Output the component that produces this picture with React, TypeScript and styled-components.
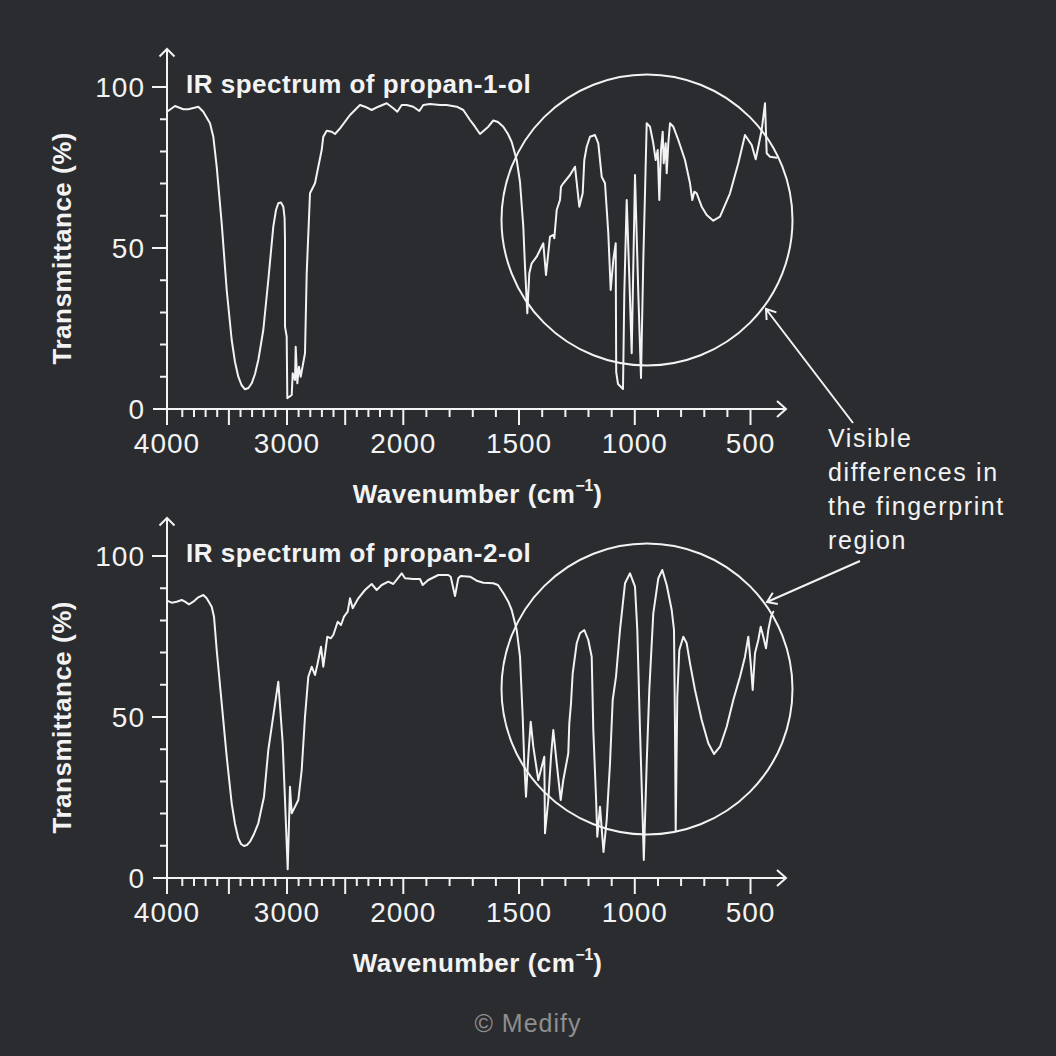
import React from "react";
import styled, { createGlobalStyle } from "styled-components";

/**
 * IR spectra of propan-1-ol and propan-2-ol, with fingerprint call-out
 */

const INK = "#f3f3f3";

const GlobalStyle = createGlobalStyle`
  html, body {
    margin: 0;
    padding: 0;
    background-color: #2b2c2f;
  }
  body {
    font-family: "Liberation Sans", Arial, sans-serif;
    color: ${INK};
  }
`;

const Page = styled.div`
  position: relative;
  width: 1056px;
  height: 1056px;
  display: flex;
  flex-direction: column;
  background-color: #2b2c2f;
  overflow: hidden;
`;

const Figure = styled.div`
  display: flex;
  flex-direction: column;
  margin: 40px 0 0 40px;
`;

const ChartBlock = styled.div`
  display: grid;
  grid-template-columns: 44px 716px;
  grid-template-rows: 425px 44px;
`;

const YTitle = styled.div`
  grid-column: 1;
  grid-row: 1;
  align-self: center;
  justify-self: center;
  margin-bottom: 9px;
  writing-mode: vertical-rl;
  transform: rotate(180deg);
  font-size: 26px;
  font-weight: 700;
  letter-spacing: 0.5px;
  line-height: 30px;
  white-space: nowrap;
`;

const XTitle = styled.div`
  grid-column: 2;
  grid-row: 2;
  justify-self: center;
  align-self: start;
  margin: 14px 0 0 71px;
  font-size: 26px;
  font-weight: 700;
  letter-spacing: 0.5px;
  line-height: 30px;
  white-space: nowrap;

  sup {
    font-size: 0.6em;
    line-height: 0;
    vertical-align: 0.75em;
    letter-spacing: 0;
  }
`;

const Plot = styled.svg`
  grid-column: 2;
  grid-row: 1;
  display: block;
  font-family: "Liberation Sans", Arial, sans-serif;
  overflow: visible;

  .line {
    fill: none;
    stroke: ${INK};
    stroke-width: 2;
  }
  .trace {
    fill: none;
    stroke: ${INK};
    stroke-width: 2;
    stroke-linejoin: round;
    stroke-linecap: round;
  }
  .tick-label {
    fill: ${INK};
    font-size: 28px;
    letter-spacing: 1px;
  }
  .title {
    fill: ${INK};
    font-size: 26px;
    font-weight: 700;
    letter-spacing: 0.5px;
  }
`;

const Overlay = styled.svg`
  position: absolute;
  inset: 0;
  pointer-events: none;
`;

const CalloutText = styled.p`
  position: absolute;
  left: 828px;
  top: 421px;
  margin: 0;
  font-size: 25px;
  line-height: 34px;
  letter-spacing: 1.6px;
`;

const Credit = styled.div`
  margin-top: 30px;
  text-align: center;
  font-size: 25px;
  line-height: 30px;
  letter-spacing: 1px;
  color: #8e8e8e;
`;

// plot geometry (px, plot frame)
const ORIGIN_X = 167;
const ORIGIN_Y = 409;
const PX_PER_PCT = 3.22;
const X_END = 786;
const Y_END = 49;

const waveX = (w: number) =>
  w >= 2000 ? 403.3 - (w - 2000) * 0.1163 : 403.3 + (2000 - w) * 0.2315;
const pctY = (t: number) => ORIGIN_Y - t * PX_PER_PCT;

const X_LABELS = [
  { text: "4000", x: ORIGIN_X },
  { text: "3000", x: waveX(3000) },
  { text: "2000", x: waveX(2000) },
  { text: "1500", x: waveX(1500) },
  { text: "1000", x: waveX(1000) },
  { text: "500", x: waveX(500) },
];

const Y_LABELS = [100, 50, 0];

// traced transmittance curves (plot frame coords)
const PROPAN_1_OL: number[][] = [
  [167, 111.7], [175, 106], [183.3, 109.3], [188.3, 109.3], [198.3, 106.7],
  [203.3, 111.7], [210, 123.3], [213.3, 136.7], [216.7, 166.7], [221.7, 223.3],
  [226.7, 290], [231.7, 340], [235, 362], [238.3, 376.7], [241.5, 385],
  [245, 389.3], [248.5, 388], [251.7, 383.3], [255, 374], [258.3, 360],
  [263.3, 330], [268.3, 280], [273.3, 226.7], [276, 210], [278.3, 203.3],
  [281, 202.5], [283.3, 206.7], [284.6, 218], [285, 240], [285, 326.7],
  [286.7, 336.7], [287.3, 398.3], [291.7, 395], [292.7, 373.3], [295, 380],
  [295.7, 346.7], [297.3, 383.3], [299, 366.7], [300.7, 376.7], [305, 353.3],
  [306.7, 273.3], [310, 193.3], [315, 183.3], [318.3, 166.7], [321.7, 150],
  [323.3, 136.7], [326.7, 130.7], [331.7, 131.7], [335, 134], [340, 128.3],
  [350, 115], [360, 105], [365, 106.7], [371.7, 110], [378.3, 106.7],
  [386.7, 103.3], [393.3, 108.3], [397.3, 111.7], [401.7, 105], [406.7, 105],
  [413.3, 106.7], [419.3, 111], [423.3, 105], [430, 104], [440, 105],
  [446.7, 105], [456.7, 106.7], [463.3, 110], [470, 120], [475, 126.7],
  [480, 134], [488.3, 126.7], [493.3, 120.5], [498, 122], [503.3, 126.7],
  [508, 134], [511.7, 142], [516.7, 160], [520, 182], [523.3, 226.7],
  [525, 266.7], [527.3, 313.3], [529.3, 273.3], [531.7, 263.3], [536.7, 256.7],
  [543.3, 243.3], [546, 275], [550, 236.7], [553.3, 235], [554.3, 238.3],
  [556.7, 210], [560, 200], [561, 186.7], [563.3, 183.3], [570, 175],
  [575, 166.7], [579.3, 206.7], [582.7, 193.3], [584.3, 160], [586.7, 146.7],
  [590, 136.7], [595, 135], [598.3, 143.3], [601.7, 176.7], [605, 183.3],
  [608.3, 233.3], [610.7, 290], [613.3, 260], [615.7, 243.3], [616.2, 372],
  [618, 384], [623, 389], [624.3, 293.3], [626.7, 200], [629.3, 276.7],
  [631.7, 353.3], [635, 175], [638.3, 293.3], [641, 378], [643.3, 260],
  [645, 193.3], [646.7, 123.3], [650, 126.7], [653.3, 143.3], [655.7, 160],
  [657.7, 150], [659.3, 200], [661, 150], [662.7, 131.7], [663.7, 163.3],
  [665.7, 143.3], [666.7, 173.3], [668.3, 143.3], [670, 123.3], [673.3, 126.7],
  [678.3, 140], [685, 160], [690, 183.3], [692.3, 200], [694.3, 191.7],
  [696.7, 193.3], [701.7, 206.7], [706.7, 215], [713.3, 220.7], [720, 216.7],
  [730, 193.3], [738.3, 163.3], [745, 135], [751.7, 145], [755.7, 159.3],
  [761.7, 130], [765, 103.3], [766.7, 153.3], [770, 156.7], [776.7, 157.7],
];

const PROPAN_2_OL: number[][] = [
  [167, 131.7], [171.7, 133.7], [176.7, 132.7], [181.7, 131], [185, 132.7],
  [189, 135.3], [193.3, 132.7], [198.3, 128.3], [203.3, 126], [206.7, 129.3],
  [211.7, 137.7], [214, 147.7], [216.7, 181], [221.7, 234.3], [226.7, 287.7],
  [231.7, 334.3], [235, 355], [238.3, 369.3], [241, 375], [244, 377],
  [247, 376], [250, 372.7], [254, 365], [258.3, 354.3], [264, 327.7],
  [268.3, 281], [278.3, 212.7], [282.7, 274.3], [285, 331], [287.7, 400.3],
  [290, 317.7], [291.7, 344.3], [295, 337.7], [298.3, 331], [301.7, 301],
  [305, 247.7], [308.3, 207.7], [311.7, 197.7], [315, 206], [317.3, 196],
  [321, 177.7], [323.3, 197.7], [327.3, 167.7], [330.7, 169.3], [333.3, 166],
  [337.7, 152.7], [341, 156], [344, 147.7], [347.7, 142.7], [350, 129.3],
  [352.7, 139.3], [358.3, 129.3], [365, 121], [371.7, 115], [376.7, 121],
  [381.7, 116], [388.3, 112.7], [393.3, 115], [401.7, 104.3], [405, 109.3],
  [413.3, 110], [420, 110], [422.7, 116], [428.3, 111], [438.3, 106],
  [448.3, 106], [450.7, 107.7], [455, 127], [458.3, 109.3], [460.7, 107],
  [470, 107.7], [476.7, 111.7], [483.3, 113.7], [493.3, 114.3], [498, 116],
  [503.3, 124], [508.3, 132.7], [511.7, 141], [516.7, 161], [520, 187.7],
  [522.7, 247.7], [524.3, 294.3], [526, 327.7], [528.3, 287.7], [530.7, 252.7],
  [533.3, 277.7], [538.3, 311], [541.7, 297.7], [544.3, 287.7], [545, 364.3],
  [548.3, 331], [551, 287.7], [553.3, 261], [556.7, 294.3], [560.7, 331],
  [563.3, 311], [568.3, 284.3], [569.3, 254.3], [571, 234.3], [572.7, 204.3],
  [576.7, 174.3], [580, 164.3], [584.3, 161], [588.3, 171], [591.7, 187.7],
  [593.3, 261], [596, 327.7], [597.3, 367.7], [600, 337.7], [603.5, 383],
  [606.7, 351], [610, 294.3], [612.7, 231], [616, 207.7], [620, 161],
  [625, 114.3], [630, 104.3], [635, 117.7], [637.3, 161], [640, 261],
  [642.7, 351], [643.8, 391], [646.7, 294.3], [649.3, 221], [653.3, 144.3],
  [658.3, 109.3], [662.3, 101], [666.7, 116], [671.7, 141], [674, 161],
  [675, 261], [675.7, 362], [677.3, 227.7], [679.3, 181], [683.3, 167.7],
  [686.7, 174.3], [690, 194.3], [695, 221], [701.7, 251], [708.3, 274.3],
  [714, 285], [720, 277.7], [726.7, 257.7], [733.3, 231], [740, 207.7],
  [745, 187.7], [748.3, 167.7], [750.7, 194.3], [752.7, 221], [755, 184.3],
  [758.3, 171], [760.7, 157.7], [763.3, 167.7], [766, 179.3], [768.3, 161],
  [771, 147.7], [773.3, 142.7],
];

const toPoints = (pts: number[][]) => pts.map(([x, y]) => `${x},${y}`).join(" ");

const xTicks = () => {
  const ticks: string[] = [];
  for (let w = 3900; w >= 500; w -= 100) {
    const x = waveX(w);
    const len = w % 500 === 0 ? 16 : 8;
    ticks.push(`M${x.toFixed(1)} ${ORIGIN_Y}v${len}`);
  }
  return ticks.join(" ");
};

const yTicks = () => {
  const ticks: string[] = [];
  for (let t = 10; t <= 100; t += 10) {
    const y = pctY(t).toFixed(1);
    ticks.push(t % 50 === 0 ? `M152 ${y}H${ORIGIN_X}` : `M160 ${y}H${ORIGIN_X}`);
  }
  return ticks.join(" ");
};

interface SpectrumProps {
  title: string; // chart heading
  trace: number[][]; // traced curve points
}

const Spectrum: React.FC<SpectrumProps> = ({ title, trace }) => {
  return (
    <ChartBlock>
      <YTitle>Transmittance (%)</YTitle>
      <Plot width={716} height={425} viewBox="84 40 716 425">
        <path
          className="line"
          d={`M${ORIGIN_X} ${ORIGIN_Y + 16}V${Y_END} M159.5 56.5L${ORIGIN_X} ${Y_END}L174.5 56.5 M153 ${ORIGIN_Y}H${X_END} M777 401L${X_END} ${ORIGIN_Y}L777 417`}
        />
        <path className="line" d={xTicks()} />
        <path className="line" d={yTicks()} />

        {Y_LABELS.map((t) => (
          <text key={t} className="tick-label" x={145} y={pctY(t) + 10} textAnchor="end">
            {t}
          </text>
        ))}
        {X_LABELS.map((l) => (
          <text key={l.text} className="tick-label" x={l.x} y={453} textAnchor="middle">
            {l.text}
          </text>
        ))}

        <text className="title" x={186} y={93}>
          {title}
        </text>

        <circle className="line" cx={647} cy={220} r={145.5} />
        <polyline className="trace" points={toPoints(trace)} />
      </Plot>
      <XTitle>
        Wavenumber (cm<sup>−1</sup>)
      </XTitle>
    </ChartBlock>
  );
};

// arrow with open head, page coords
const arrowPath = (tail: [number, number], tip: [number, number], len = 11, spread = 0.6) => {
  const ang = Math.atan2(tail[1] - tip[1], tail[0] - tip[0]);
  const a1 = ang + spread;
  const a2 = ang - spread;
  const w1 = [tip[0] + len * Math.cos(a1), tip[1] + len * Math.sin(a1)];
  const w2 = [tip[0] + len * Math.cos(a2), tip[1] + len * Math.sin(a2)];
  return `M${tail[0]} ${tail[1]}L${tip[0]} ${tip[1]} M${w1[0].toFixed(1)} ${w1[1].toFixed(1)}L${tip[0]} ${tip[1]}L${w2[0].toFixed(1)} ${w2[1].toFixed(1)}`;
};

const App: React.FC = () => {
  return (
    <>
      <GlobalStyle />
      <Page>
        <Figure>
          <Spectrum title="IR spectrum of propan-1-ol" trace={PROPAN_1_OL} />
          <Spectrum title="IR spectrum of propan-2-ol" trace={PROPAN_2_OL} />
        </Figure>

        <CalloutText>
          Visible
          <br />
          differences in
          <br />
          the fingerprint
          <br />
          region
        </CalloutText>
        <Overlay width={1056} height={1056} viewBox="0 0 1056 1056">
          <path
            d={`${arrowPath([853, 423], [766, 309])} ${arrowPath([860, 561], [767, 602])}`}
            fill="none"
            stroke={INK}
            strokeWidth={2}
          />
        </Overlay>

        <Credit>© Medify</Credit>
      </Page>
    </>
  );
};

export default App;
